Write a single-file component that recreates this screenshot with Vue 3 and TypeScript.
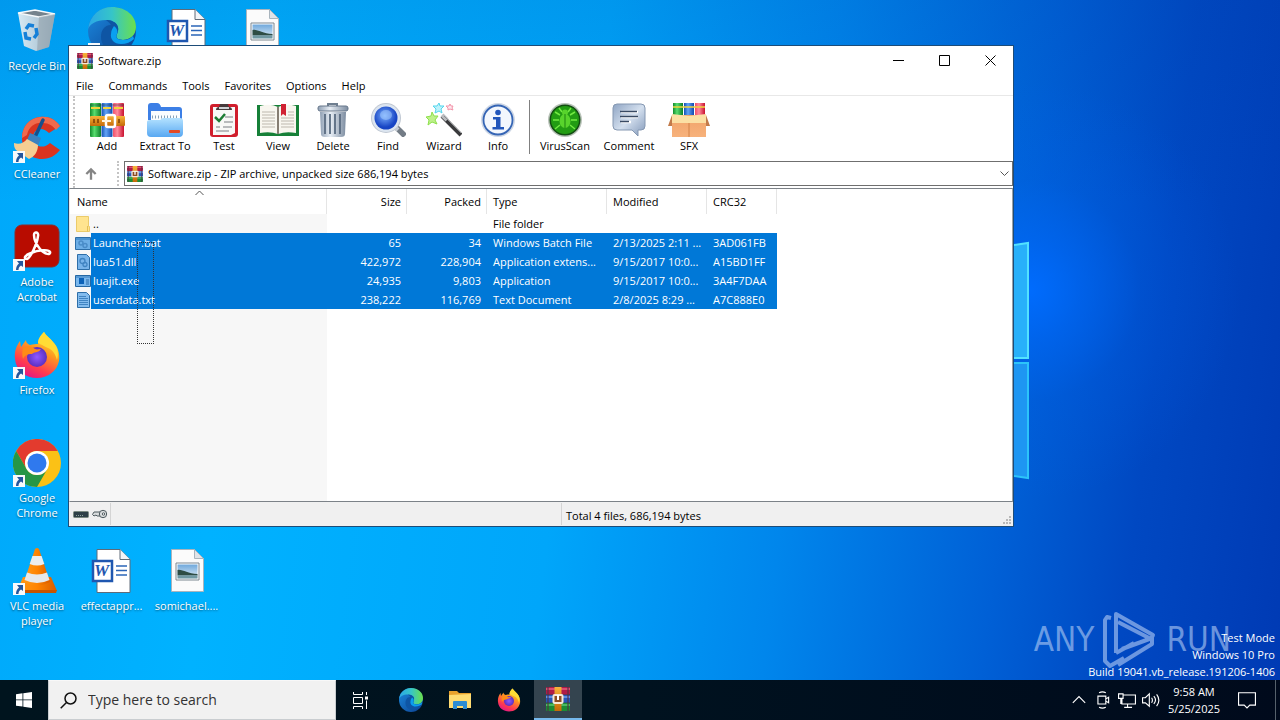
<script setup lang="ts">
import { ref } from 'vue'

interface DesktopIcon {
  id: string
  label: string
  shortcut: boolean
  cell: string
}

interface Tool {
  id: string
  label: string
}

interface ArchiveEntry {
  name: string
  icon: string
  size: string
  packed: string
  type: string
  modified: string
  crc: string
  selected: boolean
}

const desktopIcons: DesktopIcon[] = [
  { id: 'bin', label: 'Recycle Bin', shortcut: false, cell: 'c1 r1' },
  { id: 'edge', label: '', shortcut: true, cell: 'c2 r1' },
  { id: 'word', label: '', shortcut: false, cell: 'c3 r1' },
  { id: 'image', label: '', shortcut: false, cell: 'c4 r1' },
  { id: 'ccleaner', label: 'CCleaner', shortcut: true, cell: 'c1 r2' },
  { id: 'acrobat', label: 'Adobe Acrobat', shortcut: true, cell: 'c1 r3' },
  { id: 'firefox', label: 'Firefox', shortcut: true, cell: 'c1 r4' },
  { id: 'chrome', label: 'Google Chrome', shortcut: true, cell: 'c1 r5' },
  { id: 'vlc', label: 'VLC media player', shortcut: true, cell: 'c1 r6' },
  { id: 'word', label: 'effectappr...', shortcut: false, cell: 'c2 r6' },
  { id: 'image', label: 'somichael....', shortcut: false, cell: 'c3 r6' },
]

const menus: string[] = ['File', 'Commands', 'Tools', 'Favorites', 'Options', 'Help']

const archiveTools: Tool[] = [
  { id: 'add', label: 'Add' },
  { id: 'extract', label: 'Extract To' },
  { id: 'test', label: 'Test' },
  { id: 'view', label: 'View' },
  { id: 'delete', label: 'Delete' },
  { id: 'find', label: 'Find' },
  { id: 'wizard', label: 'Wizard' },
  { id: 'info', label: 'Info' },
]

const extraTools: Tool[] = [
  { id: 'virus', label: 'VirusScan' },
  { id: 'comment', label: 'Comment' },
  { id: 'sfx', label: 'SFX' },
]

const entries = ref<ArchiveEntry[]>([
  { name: '..', icon: 'folder', size: '', packed: '', type: 'File folder', modified: '', crc: '', selected: false },
  { name: 'Launcher.bat', icon: 'bat', size: '65', packed: '34', type: 'Windows Batch File', modified: '2/13/2025 2:11 ...', crc: '3AD061FB', selected: true },
  { name: 'lua51.dll', icon: 'dll', size: '422,972', packed: '228,904', type: 'Application extens...', modified: '9/15/2017 10:0...', crc: 'A15BD1FF', selected: true },
  { name: 'luajit.exe', icon: 'exe', size: '24,935', packed: '9,803', type: 'Application', modified: '9/15/2017 10:0...', crc: '3A4F7DAA', selected: true },
  { name: 'userdata.txt', icon: 'txt', size: '238,222', packed: '116,769', type: 'Text Document', modified: '2/8/2025 8:29 ...', crc: 'A7C888E0', selected: true },
])

const location = ref('Software.zip - ZIP archive, unpacked size 686,194 bytes')
const query = ref('')
</script>

<template>
  <div class="screen">
    <svg class="sprite" aria-hidden="true">
      <defs>
        <linearGradient id="gBin" x1="0" x2="1"><stop offset="0" stop-color="#eef2f5" /><stop offset="1" stop-color="#aeb9c2" /></linearGradient>
        <linearGradient id="gEdgeTop" x1="0" x2="1"><stop offset="0" stop-color="#2aa7e8" /><stop offset=".5" stop-color="#36c5c8" /><stop offset="1" stop-color="#6be04b" /></linearGradient>
        <linearGradient id="gEdgeLow" x1="0" y1="0" x2="1" y2="1"><stop offset="0" stop-color="#1b8be0" /><stop offset="1" stop-color="#0c3f8f" /></linearGradient>
        <linearGradient id="gFox" x1=".8" y1="0" x2=".3" y2="1"><stop offset="0" stop-color="#fff14a" /><stop offset=".4" stop-color="#ff9a1f" /><stop offset=".75" stop-color="#ff3c4e" /><stop offset="1" stop-color="#e31587" /></linearGradient>
        <radialGradient id="gGlobe"><stop offset="0" stop-color="#9059ff" /><stop offset="1" stop-color="#5b2fc0" /></radialGradient>
        <linearGradient id="gCone" x1="0" x2="1"><stop offset="0" stop-color="#ff9a1a" /><stop offset=".5" stop-color="#ff8400" /><stop offset="1" stop-color="#d85c00" /></linearGradient>
        <linearGradient id="gSky" x1="0" x2="0" y1="0" y2="1"><stop offset="0" stop-color="#6fa8dc" /><stop offset="1" stop-color="#e4f0f8" /></linearGradient>
        <linearGradient id="gRed" x1="0" x2="1"><stop offset="0" stop-color="#f0506a" /><stop offset=".4" stop-color="#ff8a9c" /><stop offset="1" stop-color="#c8102e" /></linearGradient>
        <linearGradient id="gGreen" x1="0" x2="1"><stop offset="0" stop-color="#118a2c" /><stop offset=".4" stop-color="#58dd6e" /><stop offset="1" stop-color="#0d7d28" /></linearGradient>
        <linearGradient id="gBlue" x1="0" x2="1"><stop offset="0" stop-color="#1450b4" /><stop offset=".4" stop-color="#62a4f6" /><stop offset="1" stop-color="#0f49ae" /></linearGradient>
        <linearGradient id="gGold" x1="0" y1="0" x2="0" y2="1"><stop offset="0" stop-color="#f8b33a" /><stop offset="1" stop-color="#c46a08" /></linearGradient>
        <linearGradient id="gFolder" x1="0" y1="0" x2="0" y2="1"><stop offset="0" stop-color="#b4e2ff" /><stop offset="1" stop-color="#58a8f2" /></linearGradient>
        <linearGradient id="gCan" x1="0" x2="1"><stop offset="0" stop-color="#8f9fb3" /><stop offset=".4" stop-color="#e8eef5" /><stop offset="1" stop-color="#7c8ca0" /></linearGradient>
        <radialGradient id="gLens" cx=".45" cy=".4"><stop offset="0" stop-color="#7db2ff" /><stop offset="1" stop-color="#1745c4" /></radialGradient>
        <linearGradient id="gBubble" x1="0" y1="0" x2="1" y2="1"><stop offset="0" stop-color="#8fa5c4" /><stop offset=".5" stop-color="#d3dfee" /><stop offset="1" stop-color="#8298b9" /></linearGradient>
        <linearGradient id="gBox" x1="0" y1="0" x2="0" y2="1"><stop offset="0" stop-color="#f0a368" /><stop offset="1" stop-color="#f7b27c" /></linearGradient>
      </defs>

      <symbol id="i-bin" viewBox="0 0 48 48">
        <path d="M5 6 22 3 42 7 36 40 23 44 11 39Z" fill="url(#gBin)" opacity=".9" />
        <path d="M5 6 22 3 42 7 26 10Z" fill="#75838d" stroke="#f6f9fb" stroke-width="1.300" />
        <path d="M26 10 42 7 36 40 24 44Z" fill="#909ca6" opacity=".55" />
        <g fill="none" stroke="#1680d8" stroke-width="3.500">
          <path d="M13 22l3-4 5 1" /><path d="M23 21l1 6-3 4" /><path d="M18 32l-5-1-1-6" />
        </g>
      </symbol>

      <symbol id="i-edge" viewBox="0 0 48 48">
        <circle cx="24" cy="24" r="24" fill="url(#gEdgeLow)" />
        <path d="M0 22C2 8 12 0 24 0c14 0 24 9 24 20 0 8-6 13-13 13-6 0-8-3-6-6 4-8-2-14-11-14C8 13 2 17 0 22Z" fill="url(#gEdgeTop)" />
        <path d="M18 13c9 0 15 6 11 14-2 3 0 6 6 6 3 0 6-1 9-3-3 9-10 14-17 14-8 0-14-6-14-14 0-6 3-12 10-12-2-3-4-4-5-5Z" fill="#0e55a4" />
        <path d="M29 27c-2 3 0 6 6 6 4 0 7-1 10-4l1 3c-3 3-8 5-13 5-7 0-11-5-10-10 0-4 2-6 3-8 3 2 4 5 3 8Z" fill="#0aa0f0" />
      </symbol>

      <symbol id="i-word" viewBox="0 0 48 48">
        <path d="M9 2.500h23l10 10v33H9Z" fill="#fff" stroke="#5f6b78" />
        <path d="M32 2.500v10h10" fill="#f2f4f7" stroke="#5f6b78" />
        <path d="M28 19h11M28 23.500h11M28 28h11" stroke="#2b65b8" stroke-width="1.500" />
        <path d="M5 14h19v20H5Z" fill="#fff" stroke="#1f57b0" stroke-width="2.500" />
      </symbol>

      <symbol id="i-image" viewBox="0 0 48 48">
        <path d="M8.500 2.500h23l9 9v33h-32Z" fill="#fbfbfb" stroke="#a9b4bd" />
        <path d="M31.500 2.500v9h9Z" fill="#dfe3e8" stroke="#a9b4bd" />
        <path d="M13 16h23v17H13Z" fill="#fff" stroke="#7c8790" />
        <path d="M14.500 17.500h20v14h-20Z" fill="url(#gSky)" />
        <path d="M14.500 23c5-1 10 4 20 4v1.500h-20Z" fill="#2e4d45" /><path d="M14.500 28.500h20v3h-20Z" fill="#6f98a2" />
      </symbol>

      <symbol id="i-ccleaner" viewBox="0 0 48 48">
        <path d="M47 11C42 4 35 1 27 2 16 3 9 12 9 23c0 12 8 21 20 21 8 0 14-4 18-9l-10-7c-7 7-17 3-17-5 0-8 8-13 16-5Z" fill="#d93420" />
        <path d="M47 11C42 4 35 1 27 2 16 3 9 12 9 23l5-3c2-9 9-13 16-12 6 0 10 3 13 7Z" fill="#f06a4c" />
        <path d="M30 5l-8 17" stroke="#16508c" stroke-width="3.500" stroke-linecap="round" />
        <path d="M17 18l11 5-3 8-11-6Z" fill="#3b83c0" />
        <path d="M14 24l11 6c0 7-4 12-9 14L3 35c-2-2-2-5-2-7 5 2 10 0 13-4Z" fill="#f5cf93" />
      </symbol>

      <symbol id="i-acrobat" viewBox="0 0 48 48">
        <rect x="2" y="2" width="44" height="42" rx="7" fill="#b80c00" stroke="#8d2b28" />
        <path d="M21 12c0-4 5-3 4 1-1 9-8 22-11 23-4 0-2-4 4-6 7-3 18-4 19-1 1 3-5 3-10-3-4-5-6-9-6-14Z" fill="none" stroke="#fff" stroke-width="2.500" />
      </symbol>

      <symbol id="i-firefox" viewBox="0 0 48 48">
        <path d="M31 1c2 4 6 6 9 10 5 5 7 12 6 19-2 10-11 17-22 17S3 40 2 28c-1-8 2-14 5-18l1 6 5-7c0 3 2 4 4 5 3-1 6-1 8-1 0-5 3-9 6-12Z" fill="url(#gFox)" />
        <circle cx="24" cy="26" r="10" fill="url(#gGlobe)" />
        <path d="M10 17c5-3 9-2 12 1 2 1 4 0 6 0-2 4-8 3-9 5-5 0-8 2-9 5-1-4-1-7 0-11Z" fill="#ff8b16" />
        <path d="M31 1c2 4 6 6 9 10 5 5 6 12 4 18-2-8-6-11-9-12-6-3-10-5-10-5 0-4 3-8 6-11Z" fill="#ffdc35" />
      </symbol>

      <symbol id="i-chrome" viewBox="0 0 48 48">
        <circle cx="24" cy="24" r="24" fill="#fbc116" />
        <path d="M3.200 12A24 24 0 0 1 44.800 12H24A12 12 0 0 0 13.600 30Z" fill="#e33b2e" />
        <path d="M3.200 12A24 24 0 0 0 24 48L34.400 30A12 12 0 0 1 13.600 30Z" fill="#269646" />
        <circle cx="24" cy="24" r="12" fill="#fff" /><circle cx="24" cy="24" r="9.500" fill="#2f79ee" />
      </symbol>

      <symbol id="i-vlc" viewBox="0 0 48 48">
        <path d="M10 30h28l6 14H4Z" fill="url(#gCone)" /><path d="M4 43h40l-1 3H5Z" fill="#c75400" />
        <path d="M22 2q2-2 4 0l11 33q-13 7-26 0Z" fill="url(#gCone)" />
        <path d="M19.400 9h9.200l2.700 8q-7 3-14.600 0Z" fill="#eceeef" />
        <path d="M14 25.500q10 4 20 0l2.500 7.500q-12.500 6-25 0Z" fill="#e6e8ea" />
      </symbol>

      <symbol id="i-arrow" viewBox="0 0 12 12">
        <path d="M0 0h12v12H0Z" fill="#f7f9fb" />
        <path d="M4 2h6v6L8 6.500C6 8 5.500 9 5.500 11H3c0-3 1-5 3-6.500Z" fill="#24569c" />
      </symbol>

      <symbol id="i-rar" viewBox="0 0 24 24">
        <rect x="0" y="0" width="24" height="7.500" rx="1" fill="#b01c48" /><path d="M0 2h24" stroke="#e8607e" stroke-width="1.500" />
        <rect x="0" y="8" width="24" height="7.500" fill="#2558ba" /><path d="M0 10h24" stroke="#7aa0ec" stroke-width="1.500" />
        <rect x="0" y="16" width="24" height="8" rx="1" fill="#1b8c35" /><path d="M0 18h24" stroke="#5cc872" stroke-width="1.500" />
        <path d="M2 0v24M22 0v24" stroke="#513044" stroke-width="2" opacity=".55" />
        <path d="M8.500 0h7v24h-7Z" fill="url(#gGold)" /><rect x="7.500" y="8" width="9" height="8" rx="1" fill="#8c4b23" stroke="#f7e8d6" stroke-width="2" />
        <path d="M12 8v5" stroke="#fff" stroke-width="2" />
      </symbol>

      <symbol id="i-add" viewBox="0 0 36 34">
        <rect x="1" y="0" width="11" height="34" rx="1" fill="url(#gGreen)" /><rect x="12.500" y="0" width="11" height="34" rx="1" fill="url(#gBlue)" /><rect x="24" y="0" width="11" height="34" rx="1" fill="url(#gRed)" />
        <path d="M1 2h11M12.500 2h11M24 2h11" stroke="#1f3b46" stroke-width="1" opacity=".5" />
        <path d="M2 5h9M14 5h8M25 5h9" stroke="#f2d43c" stroke-width="2" />
        <rect x="1" y="13" width="35" height="10" rx="1" fill="url(#gGold)" />
        <rect x="17" y="12" width="9" height="12" rx="2" fill="none" stroke="#fff" stroke-width="2.500" /><path d="M13 18h9" stroke="#fff3dc" stroke-width="2" />
        <path d="M5 16v4M9 16v4M30 16v4" stroke="#7c3e05" stroke-width="1.500" />
      </symbol>

      <symbol id="i-extract" viewBox="0 0 36 34">
        <path d="M1 3q0-3 3-3h6q3 0 4 4h18q3 0 3 3v10H1Z" fill="#3c7fe6" />
        <path d="M4 8h29v12H4Z" fill="#fbfdff" /><path d="M5 14h27" stroke="#8aa3b8" stroke-width="3" stroke-dasharray="1 2" />
        <path d="M0 19q0-2 3-2h10l3-2h17q3 0 3 3v12q0 4-4 4H4q-4 0-4-4Z" fill="url(#gFolder)" />
        <rect x="22" y="27" width="11" height="3" rx="1" fill="#e34a26" />
      </symbol>

      <symbol id="i-test" viewBox="0 0 36 34">
        <rect x="4" y="1" width="28" height="33" rx="3" fill="#d01e2c" /><path d="M7 4h22v26l-4 2H7Z" fill="#f8f8f6" />
        <path d="M10 7q0-3 3-3l1-3h8l1 3q3 0 3 3Z" fill="#473b3c" /><path d="M13 5h10" stroke="#cfd3d6" stroke-width="2" />
        <path d="M9 14l4 4 6-7" fill="none" stroke="#1d7c33" stroke-width="2.500" />
        <path d="M19 14h8M18 19h9M10 24h4M17 24h9M10 28h13" stroke="#7b7f82" stroke-width="1.200" />
      </symbol>

      <symbol id="i-view" viewBox="0 0 42 34">
        <path d="M0 2h42v31H0Z" fill="#168038" /><path d="M3 3q10-3 18 1 8-4 18-1v27q-10-2-18 1-8-3-18-1Z" fill="#f8f6ef" />
        <path d="M21 4v27" stroke="#857d72" stroke-width="2" />
        <path d="M5 9h13M5 12h13M5 15h13M5 18h13M5 21h13M5 24h13M24 15h13M24 18h13M24 21h13M24 24h13M31 9h6M31 12h6" stroke="#bdb8ae" />
        <path d="M24 1h5v12l-3-2-2 2Z" fill="#d02233" />
      </symbol>

      <symbol id="i-delete" viewBox="0 0 36 34">
        <path d="M13 3V1h9v2" fill="none" stroke="#6f7f90" stroke-width="2" /><rect x="3" y="3" width="30" height="5" rx="2" fill="url(#gCan)" stroke="#66778a" />
        <path d="M5 9h26l-1 22q0 3-4 3H10q-4 0-4-3Z" fill="url(#gCan)" />
        <path d="M10 11v20M15 11v20M20 11v20M25 11v20" stroke="#5a6c81" stroke-width="1.800" />
      </symbol>

      <symbol id="i-find" viewBox="0 0 36 34">
        <path d="M24 22l9 9" stroke="#737c86" stroke-width="5.500" stroke-linecap="square" /><path d="M23 22l5 5" stroke="#c4cbd3" stroke-width="4" />
        <circle cx="16" cy="15" r="15" fill="#bfc7d2" /><circle cx="16" cy="15" r="14" fill="#dce5f0" /><circle cx="16" cy="15" r="11.500" fill="url(#gLens)" />
        <ellipse cx="16" cy="12" rx="6" ry="5" fill="#a9d0ff" opacity=".5" />
      </symbol>

      <symbol id="i-wizard" viewBox="0 0 36 34">
        <path d="M16 13l19 19" stroke="#3a3a3c" stroke-width="4" /><path d="M16 12l5 5" stroke="#b9bcbf" stroke-width="4" /><path d="M18 13l17 17" stroke="#8e9092" />
        <path d="M6 9l2 4 4 0-3 4 2 4-5-2-4 3 1-5-3-3 5-1Z" fill="#bdf18a" stroke="#8ee04c" />
        <path d="M13 0l1 3 4 0-3 3 1 4-3-2-4 2 1-4-3-3 4 0Z" fill="#bdf2fb" stroke="#55d5ec" />
        <path d="M24 1l1 2 2 0-1 2 1 2-3-1-2 1 0-2-2-2 3 0Z" fill="#ffe5ec" stroke="#f295aa" />
      </symbol>

      <symbol id="i-info" viewBox="0 0 36 34">
        <circle cx="18" cy="17" r="17" fill="#cfd8e6" /><circle cx="18" cy="17" r="14.500" fill="#f3f7fd" stroke="#3565b5" stroke-width="1.800" />
        <circle cx="18" cy="9.500" r="2.800" fill="#2256bb" /><path d="M13 14h7.500v10H24v2.500H12.500V24H16v-7.500h-3Z" fill="#2256bb" />
      </symbol>

      <symbol id="i-virus" viewBox="0 0 36 34">
        <circle cx="18" cy="17" r="17" fill="#b9c2b9" /><circle cx="18" cy="17" r="15.500" fill="#134d12" /><circle cx="18" cy="17" r="14" fill="#229c13" />
        <g stroke="#72ea42" fill="none" stroke-width="1.500"><path d="M13 12 8 9M12 17H6M13 22l-5 4M23 12l5-3M24 17h6M23 22l5 4M15 9l-3-4M21 9l3-4" /></g>
        <ellipse cx="18" cy="18" rx="5.500" ry="7" fill="#58d42c" /><circle cx="18" cy="9.500" r="3" fill="#58d42c" /><path d="M18 11v14" stroke="#1c830f" />
      </symbol>

      <symbol id="i-comment" viewBox="0 0 36 34">
        <path d="M6 1h24q4 0 4 4v18q0 4-4 4h-3v6l-6-6H6q-4 0-4-4V5q0-4 4-4Z" fill="url(#gBubble)" stroke="#8598b2" />
        <path d="M10 9h17M10 14h17M10 19h10" stroke="#fff" stroke-width="2.500" /><path d="M9 8.500h17M9 13.500h18M9 18.500h9" stroke="#394a63" stroke-width="1.400" />
      </symbol>

      <symbol id="i-sfx" viewBox="0 0 42 34">
        <path d="M5 0h10v14H5Z" fill="url(#gGreen)" /><path d="M16 0h10v14H16Z" fill="url(#gBlue)" /><path d="M27 0h10v14H27Z" fill="url(#gRed)" /><path d="M5 4h32" stroke="#f0d43c" stroke-width="1.500" />
        <path d="M4 12h34v22H4Z" fill="url(#gBox)" /><path d="M4 11l17 2 17-2v9H4Z" fill="#fbe0a4" /><path d="M4 12 0 23h4ZM38 12l4 11h-4Z" fill="#c27b4a" />
        <path d="M21 20v14" stroke="#d28248" />
      </symbol>

      <symbol id="i-folder" viewBox="0 0 16 16">
        <path d="M1.500.500h12v10h1v5h-13Z" fill="#ffe48f" stroke="#ebcb6a" /><path d="M12.500 10v5.500" stroke="#e5bf54" />
      </symbol>
      <symbol id="i-bat" viewBox="0 0 16 16">
        <path d="M.500 2.500h15v12H.500Z" fill="#6caee6" stroke="#2d6ea8" /><path d="M1 4h14" stroke="#4c93d0" stroke-width="2" />
        <circle cx="6" cy="8" r="2" fill="none" stroke="#4a8cc8" stroke-width="1.500" /><circle cx="10" cy="10.500" r="2" fill="none" stroke="#4a8cc8" stroke-width="1.500" />
      </symbol>
      <symbol id="i-dll" viewBox="0 0 16 16">
        <path d="M2.500.500h9l3 3v12h-12Z" fill="#78b4ea" stroke="#2d6ea8" /><circle cx="7.500" cy="7" r="2.500" fill="none" stroke="#4084c2" stroke-width="1.300" /><circle cx="10" cy="10.500" r="2" fill="none" stroke="#4084c2" stroke-width="1.300" />
      </symbol>
      <symbol id="i-exe" viewBox="0 0 16 16">
        <path d="M.500 2.500h15v11H.500Z" fill="#7ab8ee" stroke="#2568a4" /><path d="M1 4h14" stroke="#377dbc" /><path d="M4 5h5v6H4Z" fill="#0b62b8" /><path d="M11 7h3M11 9h3M11 11h3" stroke="#2a6cab" />
      </symbol>
      <symbol id="i-txt" viewBox="0 0 16 16">
        <path d="M2.500.500h9l3 3v12h-12Z" fill="#83bcee" stroke="#2d6ea8" /><path d="M4 4.500h7M4 6.500h9M4 8.500h9M4 10.500h9M4 12.500h9" stroke="#4084c2" />
      </symbol>
    </svg>

    <main class="desktop">
      <svg class="logo-panes" viewBox="0 0 20 240" aria-hidden="true">
        <path d="M-10 7 18 3v115H-10Z" fill="#28b0fa" stroke="#52e2ff" stroke-width="2" />
        <path d="M-10 123H18v115l-28-4Z" fill="#1e96f2" stroke="#2cc4fa" stroke-width="2" />
      </svg>

      <div class="icons">
        <a v-for="icon in desktopIcons" :key="icon.cell" href="#" class="shortcut" :class="icon.cell" :aria-label="icon.label || icon.id">
          <span class="picture">
            <svg class="pic"><use :href="'#i-' + icon.id" /></svg>
            <b v-if="icon.id === 'word'" class="w-letter">W</b>
            <svg v-if="icon.shortcut" class="badge"><use href="#i-arrow" /></svg>
          </span>
          <span class="caption">{{ icon.label }}</span>
        </a>
      </div>

      <div class="brand">
        <span>ANY</span>
        <svg viewBox="0 0 56 60" class="brand-mark" aria-hidden="true">
          <path d="M9 8 5 7 3 10v41l5 5 14-8M14 43V4l37 21-2 4-33-17M14 43 32 33M20 39l30-11v6L16 55M14 43V16" fill="none" stroke="currentColor" stroke-width="4" stroke-linejoin="round" />
        </svg>
        <span>RUN</span>
      </div>
      <div class="build">
        <div>Test Mode</div>
        <div>Windows 10 Pro</div>
        <div>Build 19041.vb_release.191206-1406</div>
      </div>

      <section class="window">
        <header class="titlebar">
          <svg class="i16"><use href="#i-rar" /></svg>
          <h1>Software.zip</h1>
          <div class="controls">
            <button type="button" aria-label="Minimize"><svg viewBox="0 0 11 11"><path d="M0 5.500h11" /></svg></button>
            <button type="button" aria-label="Maximize"><svg viewBox="0 0 11 11"><path d="M.500.500h10v10H.500Z" /></svg></button>
            <button type="button" aria-label="Close"><svg viewBox="0 0 11 11"><path d="M.500.500l10 10M10.500.500l-10 10" /></svg></button>
          </div>
        </header>

        <nav class="menubar">
          <button v-for="m in menus" :key="m" type="button">{{ m }}</button>
        </nav>

        <div class="bars">
          <div class="toolbar">
            <button v-for="t in archiveTools" :key="t.id" type="button">
              <svg :class="{ wide: t.id === 'view' }"><use :href="'#i-' + t.id" /></svg>
              <span>{{ t.label }}</span>
            </button>
            <i class="divider"></i>
            <button v-for="t in extraTools" :key="t.id" type="button">
              <svg :class="{ wide: t.id === 'sfx' }"><use :href="'#i-' + t.id" /></svg>
              <span>{{ t.label }}</span>
            </button>
          </div>
          <div class="address">
            <button type="button" class="up" aria-label="Up one level">
              <svg viewBox="0 0 12 12"><path d="M6 11V2M2 6l4-4 4 4" /></svg>
            </button>
            <label class="combo">
              <svg class="i16"><use href="#i-rar" /></svg>
              <select v-model="location" aria-label="Location">
                <option>Software.zip - ZIP archive, unpacked size 686,194 bytes</option>
              </select>
              <svg class="chev" viewBox="0 0 9 6"><path d="M.500.500l4 4 4-4" /></svg>
            </label>
          </div>
        </div>

        <div class="listing">
          <table>
            <colgroup><col class="w-name" /><col class="w-num" /><col class="w-num" /><col class="w-type" /><col class="w-mod" /><col class="w-crc" /></colgroup>
            <thead>
              <tr>
                <th>Name<svg class="sort" viewBox="0 0 9 6"><path d="M.500 5l4-4 4 4" /></svg></th>
                <th class="num">Size</th>
                <th class="num">Packed</th>
                <th>Type</th>
                <th>Modified</th>
                <th>CRC32</th>
              </tr>
            </thead>
            <tbody>
              <tr v-for="e in entries" :key="e.name" :class="{ selected: e.selected }">
                <td class="file"><div><svg class="i16"><use :href="'#i-' + e.icon" /></svg><span>{{ e.name }}</span></div></td>
                <td class="num">{{ e.size }}</td>
                <td class="num">{{ e.packed }}</td>
                <td>{{ e.type }}</td>
                <td>{{ e.modified }}</td>
                <td>{{ e.crc }}</td>
              </tr>
            </tbody>
          </table>
          <div class="marquee"></div>
        </div>

        <footer class="status">
          <div class="locks">
            <svg viewBox="0 0 16 8"><rect x=".5" y="1.500" width="15" height="6" rx="1" fill="#2e4047" stroke="#7b8a80" /><path d="M3 5.500h8" stroke="#8fa39c" stroke-dasharray="1 1" /></svg>
            <svg viewBox="0 0 16 10" class="key"><path d="M8 3H2L.500 5.500 2 7l2-1 1 1h3" fill="#d9dcdd" stroke="#4e5a5f" /><circle cx="11" cy="5" r="3.700" fill="#d9dcdd" stroke="#4e5a5f" /><circle cx="11.500" cy="5" r="1.200" fill="#fff" stroke="#4e5a5f" /></svg>
          </div>
          <div class="blank"></div>
          <div class="total">Total 4 files, 686,194 bytes</div>
          <svg class="grip" viewBox="0 0 9 9"><path d="M6 0h2v2H6ZM3 3h2v2H3ZM6 3h2v2H6ZM0 6h2v2H0ZM3 6h2v2H3ZM6 6h2v2H6Z" fill="#b8b8b8" /></svg>
        </footer>
      </section>
    </main>

    <footer class="taskbar">
      <button type="button" class="task" aria-label="Start">
        <svg viewBox="0 0 16 16" class="start"><path d="M0 2.200 6.500 1.300v6.200H0ZM7.300 1.200 16 0v7.500H7.300ZM0 8.300h6.500v6.300L0 13.700ZM7.300 8.300H16V16l-8.700-1.200Z" fill="#fff" /></svg>
      </button>
      <label class="search">
        <svg viewBox="0 0 17 17"><circle cx="10.500" cy="6.500" r="5.500" /><path d="M6.500 10.500.700 16.300" /></svg>
        <input v-model="query" type="text" placeholder="Type here to search" aria-label="Search" />
      </label>
      <button type="button" class="task view" aria-label="Task View">
        <svg viewBox="0 0 17 17" class="tv"><path d="M1.500 0v2.500h9V0M1.500 17v-2.500h9V17M1.500 5.500h9v6h-9ZM14.500 0v3M14.500 8.500V17" /><path d="M13 4.500h3v3h-3Z" class="solid" /></svg>
      </button>
      <div class="apps">
        <button type="button" class="task" aria-label="Edge"><svg class="i24"><use href="#i-edge" /></svg></button>
        <button type="button" class="task" aria-label="File Explorer">
          <svg class="i24" viewBox="0 0 24 24"><path d="M1 3h8l2 2h12v4H1Z" fill="#e9a22c" /><path d="M1 7l22-1v14H1Z" fill="#ffdc72" /><path d="M5 21v-7q0-1 1-1h12q1 0 1 1v7h-4v-3H9v3Z" fill="#2c8dd4" /></svg>
        </button>
        <button type="button" class="task" aria-label="Firefox"><svg class="i24"><use href="#i-firefox" /></svg></button>
        <button type="button" class="task active" aria-label="WinRAR"><svg class="i24"><use href="#i-rar" /></svg></button>
      </div>
      <div class="tray">
        <button type="button" aria-label="Hidden icons"><svg viewBox="0 0 16 16"><path d="M2.500 10.500 8 5l5.500 5.500" /></svg></button>
        <button type="button" aria-label="Camera"><svg viewBox="0 0 16 16"><path d="M3.500 4.500h7v7h-7ZM10.500 7l2.500-1.500v5L10.500 9M4.500 1.500q3-1.500 6 0M4.500 14.500q3 1.500 6 0" /></svg></button>
        <button type="button" aria-label="Network"><svg viewBox="0 0 16 16"><path d="M5 3.500h10.500v8H3.500V7M8.500 11.500v3M5.500 14.500h7M.500 2.500h4v4h-4ZM2.500 6.500v5" /></svg></button>
        <button type="button" aria-label="Volume"><svg viewBox="0 0 16 16"><path d="M.500 6v4.500h2.500L6.500 13.500V2.500L3 6ZM8.500 6q1.500 2 0 4.500M10.500 4.500q3 3.500 0 7M13 3q4 5 0 10.500" /></svg></button>
        <time class="clock"><span>9:58 AM</span><span>5/25/2025</span></time>
        <button type="button" class="notes" aria-label="Notifications"><svg viewBox="0 0 16 16"><path d="M.500 1.500h15v11h-5L8 15l-2.500-2.500h-5Z" /></svg></button>
        <i class="peek"></i>
      </div>
    </footer>
  </div>
</template>

<style>
body {
  margin: 0;
  overflow: hidden;
}
</style>

<style scoped>
* {
  box-sizing: border-box;
}

.screen {
  display: grid;
  grid-template-rows: 1fr 40px;
  height: 100vh;
  font: 11px/15px "Open Sans", "Noto Sans", sans-serif;
  color: #000;
}

button,
select,
input {
  font: inherit;
  color: inherit;
  border: 0;
  padding: 0;
  background: none;
  border-radius: 0;
}

svg {
  display: block;
  flex: none;
}

.sprite {
  position: absolute;
  width: 0;
  height: 0;
}

.i16 {
  width: 16px;
  height: 16px;
}

.i24 {
  width: 24px;
  height: 24px;
}

/* Desktop */
.desktop {
  position: relative;
  overflow: hidden;
  background:
    radial-gradient(circle at 1030px 290px, rgba(0, 108, 255, 0.95), rgba(0, 104, 250, 0.6) 50px, rgba(0, 95, 235, 0.25) 110px, rgba(0, 90, 230, 0) 210px),
    linear-gradient(180deg, rgba(0, 60, 160, 0.14), rgba(0, 60, 160, 0) 30%),
    linear-gradient(97deg, #00a8fa 0%, #00b2ff 20%, #00a6fa 45%, #0086ec 62%, #0060d6 78%, #0048c2 88%, #003ab4 100%);
}

.logo-panes {
  position: absolute;
  left: 1010px;
  top: 240px;
  width: 20px;
  height: 240px;
}

.icons {
  display: grid;
  grid-template-columns: 74px repeat(3, 75px);
  grid-auto-rows: 108px;
}

.c1 { grid-column: 1; }
.c2 { grid-column: 2; }
.c3 { grid-column: 3; }
.c4 { grid-column: 4; }
.r1 { grid-row: 1; }
.r2 { grid-row: 2; }
.r3 { grid-row: 3; }
.r4 { grid-row: 4; }
.r5 { grid-row: 5; }
.r6 { grid-row: 6; }

.shortcut {
  display: flex;
  flex-direction: column;
  align-items: center;
  gap: 3px;
  padding-top: 7px;
  color: #fff;
  text-decoration: none;
}

.picture {
  position: relative;
}

.pic {
  width: 48px;
  height: 48px;
}

.badge {
  position: absolute;
  left: 0;
  bottom: 0;
  width: 12px;
  height: 12px;
}

.w-letter {
  position: absolute;
  left: 4px;
  top: 14px;
  width: 20px;
  font: italic 700 17px/20px "Liberation Serif", serif;
  text-align: center;
  color: #1f57b0;
}

.caption {
  width: 66px;
  text-align: center;
  text-shadow: 0 1px 2px rgba(0, 0, 0, 0.5);
}

.brand {
  position: absolute;
  right: 49px;
  bottom: 10px;
  display: flex;
  align-items: center;
  gap: 8px;
  font: 33px/60px "Liberation Sans Narrow", "DejaVu Sans Condensed", sans-serif;
  color: rgba(180, 205, 245, 0.6);
}

.brand-mark {
  width: 56px;
  height: 60px;
}

.build {
  position: absolute;
  right: 5px;
  bottom: 0;
  text-align: right;
  line-height: 17px;
  color: #fff;
}

/* Archive window */
.window {
  position: absolute;
  inset: 45px 266px 153px 68px;
  display: flex;
  flex-direction: column;
  background: #fff;
  border: 1px solid #1d4c78;
}

.titlebar {
  display: flex;
  align-items: center;
  flex: 0 0 29px;
  padding-left: 8px;
}

.titlebar h1 {
  flex: 1;
  margin: 0;
  padding-left: 5px;
  font: inherit;
}

.controls {
  display: flex;
}

.controls button {
  display: grid;
  place-items: center;
  width: 46px;
  height: 29px;
}

.controls svg {
  width: 11px;
  height: 11px;
  fill: none;
  stroke: #000;
}

.menubar {
  display: flex;
  flex: 0 0 21px;
  gap: 15px;
  padding-left: 7px;
  border-bottom: 1px solid #e8e8e8;
}

.bars {
  flex: 0 0 92px;
  margin-left: 4px;
  border-left: 2px dotted #c4c4c4;
}

.toolbar {
  display: grid;
  grid-template-columns: 50px 66px 52px 56px 54px 56px 56px 52px 10px 62px 66px 54px;
  padding: 4px 0 0 7px;
  height: 62px;
}

.toolbar button {
  display: flex;
  flex-direction: column;
  align-items: center;
  justify-content: flex-start;
  gap: 1px;
  padding-top: 3px;
  white-space: nowrap;
}

.toolbar svg {
  width: 36px;
  height: 34px;
}

.toolbar .wide {
  width: 42px;
}

.divider {
  width: 1px;
  height: 54px;
  margin-left: 5px;
  background: #808080;
}

.address {
  display: flex;
  height: 28px;
  padding-top: 3px;
}

.up {
  width: 44px;
  border-right: 2px dotted #c4c4c4;
}

.up svg {
  width: 14px;
  height: 14px;
  margin-left: 9px;
  fill: none;
  stroke: #858585;
  stroke-width: 2;
}

.combo {
  display: flex;
  flex: 1;
  align-items: center;
  gap: 5px;
  height: 25px;
  margin-left: 5px;
  padding: 0 3px 0 2px;
  border: 1px solid #6f6f6f;
}

.combo select {
  flex: 1;
  appearance: none;
}

.chev,
.sort {
  width: 9px;
  height: 6px;
  fill: none;
  stroke: #555;
}

.listing {
  position: relative;
  flex: 1;
  min-height: 0;
  border: 1px solid #7c8288;
  border-right-color: #9aa0a6;
  border-left: 1px solid #e4e8ec;
  background: linear-gradient(#f7f7f7, #f7f7f7) 0 25px / 257px 100% no-repeat #fff;
}

table {
  table-layout: fixed;
  width: 707px;
  border-collapse: separate;
  border-spacing: 0;
}

.w-name { width: 257px; }
.w-num { width: 80px; }
.w-type { width: 120px; }
.w-mod { width: 100px; }
.w-crc { width: 70px; }

th {
  position: relative;
  height: 25px;
  padding: 0 5px 0 6px;
  border-right: 1px solid #e5e5e5;
  font-weight: 400;
  text-align: left;
}

th:first-child {
  padding-left: 7px;
}

td {
  height: 19px;
  padding: 0 0 0 6px;
  white-space: nowrap;
}

th.num {
  text-align: right;
}

td.num {
  padding-right: 6px;
  text-align: right;
}

.sort {
  position: absolute;
  top: 1px;
  left: 125px;
}

.file {
  padding: 0 0 0 5px;
}

.file div {
  display: flex;
  align-items: center;
  height: 19px;
}

.file span {
  flex: 1;
  padding-left: 2px;
  line-height: 19px;
}

.selected td {
  color: #fff;
  background: #0078d7;
}

.selected .file {
  background: none;
}

.selected .file span {
  background: #0078d7;
}

.marquee {
  position: absolute;
  left: 67px;
  top: 53px;
  width: 17px;
  height: 102px;
  border: 1px dotted #333;
}

.status {
  display: flex;
  flex: 0 0 24px;
  align-items: center;
  background: #f0f0f0;
}

.locks {
  display: flex;
  align-items: center;
  gap: 3px;
  width: 42px;
  height: 22px;
  padding-left: 4px;
  border-right: 1px solid #d4d4d4;
}

.locks svg {
  width: 16px;
  height: 8px;
}

.locks .key {
  height: 10px;
}

.blank {
  width: 451px;
  height: 22px;
  border-right: 1px solid #d4d4d4;
}

.total {
  flex: 1;
  padding: 3px 0 0 4px;
}

.grip {
  align-self: flex-end;
  width: 9px;
  height: 9px;
  margin: 1px;
}

/* Taskbar */
.taskbar {
  display: flex;
  background: linear-gradient(90deg, #00141e, #00121f 50%, #000a1c);
  color: #fff;
}

.task {
  display: grid;
  place-items: center;
  width: 48px;
}

.start {
  width: 16px;
  height: 16px;
}

.search {
  display: flex;
  align-items: center;
  gap: 11px;
  width: 288px;
  padding-left: 11px;
  background: #f1f1f1;
  border: 1px solid #c9cdd0;
  border-top-color: #f8f8f8;
}

.search svg {
  width: 17px;
  height: 17px;
  fill: none;
  stroke: #111;
  stroke-width: 1.5;
}

.search input {
  flex: 1;
  min-width: 0;
  font-size: 14px;
  line-height: 20px;
  color: #333;
  outline: 0;
}

.search input::placeholder {
  color: #333;
  opacity: 1;
}

.tv {
  width: 17px;
  height: 17px;
  fill: none;
  stroke: #fff;
}

.tv .solid {
  fill: #fff;
  stroke: none;
}

.apps {
  display: flex;
  gap: 1px;
  margin-left: 3px;
}

.active {
  background: #34444f;
  border-bottom: 2px solid #76b9ed;
}

.tray {
  display: flex;
  align-items: center;
  margin-left: auto;
}

.tray button {
  display: grid;
  place-items: center;
  width: 24px;
  height: 40px;
}

.tray svg {
  width: 18px;
  height: 18px;
  fill: none;
  stroke: #fff;
}

.clock {
  display: flex;
  flex-direction: column;
  width: 62px;
  text-align: center;
  line-height: 17px;
}

.tray .notes {
  width: 44px;
  margin-right: 6px;
}

.peek {
  width: 5px;
  height: 40px;
  border-left: 1px solid #56616c;
}
</style>
